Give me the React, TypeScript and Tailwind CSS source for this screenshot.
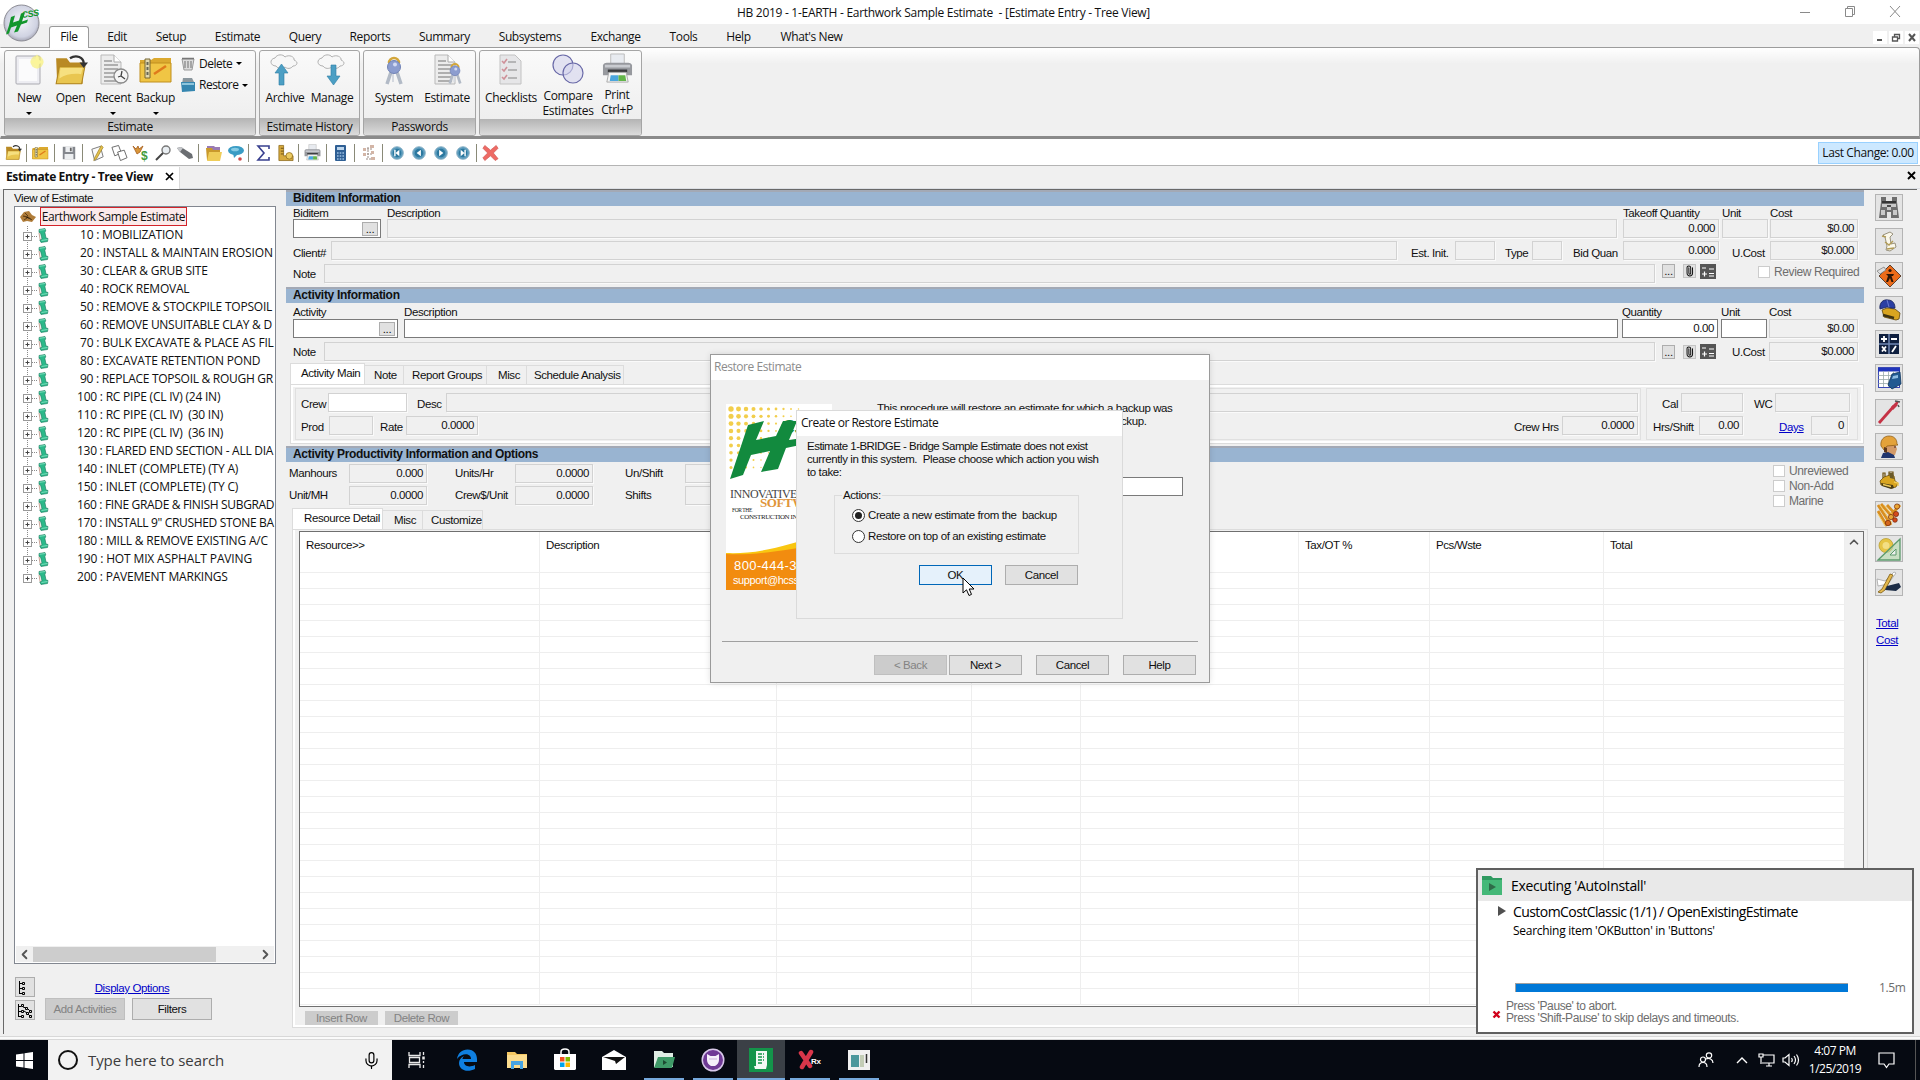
import React from "react";
import { Mic, ChevronUp, ChevronLeft, ChevronRight, Paperclip } from "lucide-react";

const UI = "font-['Open_Sans',sans-serif] text-[12px] tracking-[-0.4px]";

/* ---------- small building blocks ---------- */

type BoxProps = { className?: string; children?: React.ReactNode };

function Field({ className = "", children }: BoxProps) {
  return (
    <div className={`h-[19px] shrink-0 border border-[#d2d2d2] bg-[#f0f0f0] pr-[3px] text-right leading-[16px] shadow-[1px_1px_0_#fafafa] ${className}`}>
      {children}
    </div>
  );
}

function Input({ className = "", children }: BoxProps) {
  return (
    <div className={`h-[19px] shrink-0 border border-[#7a7a7a] bg-white pr-[3px] text-right leading-[16px] ${className}`}>
      {children}
    </div>
  );
}

function Label({ className = "", children }: BoxProps) {
  return <div className={`shrink-0 whitespace-pre leading-[14px] ${className}`}>{children}</div>;
}

function Dots({ className = "" }: { className?: string }) {
  return (
    <div className={`flex h-[14px] shrink-0 items-center justify-center border border-[#adadad] bg-[#e1e1e1] leading-[8px] ${className}`}>
      ...
    </div>
  );
}

function Button({ className = "", children }: BoxProps) {
  return (
    <div className={`flex shrink-0 items-center justify-center border border-[#adadad] bg-[#e1e1e1] pt-px ${className}`}>
      {children}
    </div>
  );
}

function SectionHeader({ children }: BoxProps) {
  return (
    <div className="h-[16px] shrink-0 border-t-2 border-[#a3a9b5] bg-[#99b4d1] pl-[7px] text-[12px] font-bold leading-[13px] tracking-[-0.3px]">
      {children}
    </div>
  );
}

function Check({ className = "", children }: BoxProps) {
  return (
    <div className={`flex items-center text-[#6d6d6d] ${className}`}>
      <span className="mr-1 h-[12px] w-[12px] border border-[#cccccc] bg-white" />
      {children}
    </div>
  );
}

function NoteButtons() {
  return (
    <>
      <Dots className="ml-[7px] w-[13px]" />
      <div className="ml-[8px] flex h-[14px] w-[13px] items-center justify-center border border-[#c4c4c4] bg-[#e1e1e1]">
        <Paperclip size={12} strokeWidth={2.2} className="rotate-[-45deg]" />
      </div>
      <svg className="ml-[4px]" width="16" height="15" viewBox="0 0 16 15">
        <rect width="16" height="15" fill="#555" />
        <path d="M2 4h4M9 5h5M9 9.5h5M2 10h5M4.500 7.500v5M9 12h5" stroke="#fff" strokeWidth="1.200" />
      </svg>
    </>
  );
}

/* ---------- icons ---------- */

const Logo = () => (
  <svg width="38" height="38" viewBox="0 0 38 38">
    <defs>
      <radialGradient id="orb" cx="50%" cy="45%" r="58%">
        <stop offset="0" stopColor="#f4f5fa" />
        <stop offset="0.75" stopColor="#d0d3e2" />
        <stop offset="1" stopColor="#9c9cab" />
      </radialGradient>
    </defs>
    <ellipse cx="18.500" cy="19" rx="17.500" ry="18" fill="url(#orb)" stroke="#8d8d95" />
    <path d="M8 13l4-1.500-2 7 6-2 2-7 4-1-3 9 6-2-1 3-6 2-3 7-4 1 3-7-6 2-2 6-3 1 3-9z" fill="#12962c" />
    <text x="19" y="14" fontSize="9" fontWeight="700" fontStyle="italic" fill="#12962c" fontFamily="Liberation Sans" transform="rotate(-8 19 14)">CSS</text>
  </svg>
);

const Folder = ({ s = 32, arrow = false }: { s?: number; arrow?: boolean }) => (
  <svg width={s} height={s} viewBox="0 0 32 32">
    <path d="M2 5h10l3 4h12v20H3z" fill="#b98a24" />
    <path d="M2 29l3-16h24l-3 16z" fill="#e9c650" stroke="#b08520" />
    <path d="M6 14h21l-1.500 6C19 19 11 20 5 24z" fill="#f6e080" />
    {arrow && <path d="M15 5c6-4 13-1 13 5" fill="none" stroke="#333" strokeWidth="2.200" />}
    {arrow && <path d="M24 9h8l-4 5z" fill="#333" />}
  </svg>
);

const NewIcon = () => (
  <svg width="32" height="32" viewBox="0 0 32 32">
    <rect x="3" y="2" width="24" height="28" rx="1" fill="#ededf2" stroke="#a9a9b0" />
    <path d="M6 5h18v22H6z" fill="#fbfbfc" />
    <circle cx="24" cy="8" r="6.500" fill="#f6ee66" opacity=".6" />
    <path d="M24 0l2 6 5 2-5 2-2 5-2-5-5-2 5-2z" fill="#fbf59a" />
  </svg>
);

const PageLines = () => (
  <>
    <path d="M4 1h13l7 7v22H4z" fill="#ececec" stroke="#b9b9b9" />
    <path d="M17 1v7h7" fill="#fff" stroke="#aaa" />
    <path d="M7 7h8M7 11h14M7 15h14M7 19h14M7 23h14M7 27h14" stroke="#9a9a9a" strokeWidth="1.500" />
  </>
);

const RecentIcon = () => (
  <svg width="32" height="32" viewBox="0 0 32 32">
    <PageLines />
    <circle cx="24" cy="22" r="7" fill="#f5f5f5" stroke="#8a8a8a" strokeWidth="1.300" />
    <path d="M25 17l-1 5 4 3M24 22l-3 1" stroke="#444" fill="none" strokeWidth="1.300" />
  </svg>
);

const BackupIcon = ({ s = 34 }: { s?: number }) => (
  <svg width={s} height={(s * 32) / 34} viewBox="0 0 34 32">
    <path d="M1 6h11l3-2h17v24H1z" fill="#dba92f" />
    <path d="M1 9h31v19H1z" fill="#f0c544" stroke="#c08f1f" />
    <path d="M6 5h5v19H6z" fill="#e2d8ae" stroke="#776633" />
    <path d="M8.500 8v14" stroke="#665" strokeWidth="2" strokeDasharray="3 2" />
    <path d="M15 20l12-8" stroke="#df7a1b" strokeWidth="2.500" />
  </svg>
);

const TrashIcon = () => (
  <svg width="14" height="15" viewBox="0 0 14 15">
    <path d="M1 3h12l-2 11H3z" fill="#dcdcdc" stroke="#999" />
    <path d="M4 5v7M7 5v7M10 5v7" stroke="#888" strokeWidth="1.300" />
    <path d="M1 2.500h12" stroke="#777" strokeWidth="1.500" />
  </svg>
);

const RestoreIcon = () => (
  <svg width="16" height="16" viewBox="0 0 16 16">
    <path d="M3 1h9l3 6H2z" fill="#8b979e" />
    <path d="M1 5h14v9l-13 1z" fill="#3586b0" />
    <path d="M2 6h12v2H2z" fill="#8cc4dc" />
  </svg>
);

const CloudIcon = ({ down = false }: { down?: boolean }) => (
  <svg width="32" height="32" viewBox="0 0 32 32">
    <path d="M7 12c-6 0-7-7-1-8 2-4 8-4 10-1 4-3 10 0 9 3 5 2 3 6-1 6-2 3-6 3-8 1-3 2-7 2-9-1z" fill="#f7f7f7" stroke="#b0b0b0" />
    {down ? (
      <path d="M15 11h5v11h4l-6.500 9L11 22h4z" fill="#4c9fc4" stroke="#2c7ea6" strokeWidth=".6" />
    ) : (
      <path d="M10 31V19H6l6.500-9 6.500 9h-4v12z" fill="#4c9fc4" stroke="#2c7ea6" strokeWidth=".6" />
    )}
  </svg>
);

const Keys = () => (
  <g>
    <path d="M11 9a5 5 0 1 1 10 0" fill="none" stroke="#d3a63a" strokeWidth="2.500" />
    <path d="M13 18l-4 12M19 18l4 12" stroke="#b2bac6" strokeWidth="3.500" />
    <path d="M15 20v8" stroke="#d4d8df" strokeWidth="2" />
    <ellipse cx="16" cy="13" rx="6.500" ry="6.500" fill="#8c9dcf" stroke="#7082b5" />
    <circle cx="17" cy="10.500" r="2" fill="#d2daf3" />
  </g>
);

const SystemIcon = () => (
  <svg width="32" height="32" viewBox="0 0 32 32"><Keys /></svg>
);

const EstimateKeyIcon = () => (
  <svg width="32" height="32" viewBox="0 0 32 32">
    <PageLines />
    <g transform="translate(12 7) scale(.75)"><Keys /></g>
  </svg>
);

const ChecklistIcon = () => (
  <svg width="32" height="32" viewBox="0 0 32 32">
    <path d="M5 1h15l6 6v23H5z" fill="#e6e6e8" stroke="#c2c2c2" />
    <path d="M13 8h8M13 16h9M13 24h9" stroke="#a5a5a5" strokeWidth="1.500" />
    <path d="M7 7l2 2 3-4M7 15l2 2 3-4M7 23l2 2 3-4" stroke="#cf9199" fill="none" strokeWidth="1.600" />
  </svg>
);

const CompareIcon = () => (
  <svg width="34" height="32" viewBox="0 0 34 32">
    <circle cx="12" cy="12" r="10" fill="#d3d3ec" fillOpacity=".6" stroke="#6a6aa8" strokeWidth="1.200" />
    <circle cx="22" cy="20" r="10" fill="#d3d3ec" fillOpacity=".6" stroke="#6a6aa8" strokeWidth="1.200" />
  </svg>
);

const PrinterIcon = ({ s = 32 }: { s?: number }) => (
  <svg width={s} height={s} viewBox="0 0 32 32">
    <path d="M9 1h14v12H9z" fill="#e8ebf0" stroke="#bbb" />
    <path d="M1 13c0-2 2-3 4-3h22c2 0 4 1 4 3v10H1z" fill="#97999e" />
    <path d="M3 12h26v3H3z" fill="#c9cbd0" />
    <path d="M6 17h20v3H6z" fill="#3a3b3e" />
    <path d="M7 20h18l2 10H5z" fill="#f5f5f5" stroke="#aaa" />
    <path d="M9 23h8v6H8z" fill="#4ba6de" />
    <path d="M17 23h7l1 6h-8z" fill="#63b54a" />
  </svg>
);

const small = "0 0 18 18";
const TI: Record<string, React.ReactNode> = {
  open: <Folder s={17} arrow />,
  backup: <BackupIcon s={17} />,
  save: (
    <svg width="16" height="16" viewBox={small}><path d="M2 2h14v14H2z" fill="#84878d" /><path d="M5 2h8v6H5zM4 10h10v6H4z" fill="#eceef0" /><path d="M10 3h2v4h-2z" fill="#666" /></svg>
  ),
  edit: (
    <svg width="17" height="18" viewBox={small}><path d="M3 5l9-3 3 11-9 4z" fill="#fafafa" stroke="#777" /><path d="M13 1l-7 13-1 3 3-2L15 3z" fill="#e4c14c" stroke="#9b7c1d" strokeWidth=".7" /></svg>
  ),
  copy: (
    <svg width="17" height="18" viewBox={small}><path d="M1 3l7-2 3 8-7 3z" fill="#fff" stroke="#666" /><path d="M7 8l7-2 3 8-7 3z" fill="#fff" stroke="#666" /></svg>
  ),
  cost: (
    <svg width="18" height="18" viewBox={small}><path d="M1 2l4 8 3-2 3-6-4 3-1-3-2 3z" fill="#d9963a" stroke="#a45c1b" strokeWidth=".8" /><text x="9" y="16" fontSize="12" fontWeight="700" fill="#3f9b3a" fontFamily="Liberation Sans">$</text></svg>
  ),
  search: (
    <svg width="18" height="18" viewBox={small}><circle cx="12" cy="6" r="4" fill="#e9eef2" stroke="#777" strokeWidth="1.400" /><path d="M9 9l-7 7" stroke="#444" strokeWidth="2" /></svg>
  ),
  torch: (
    <svg width="18" height="18" viewBox={small}><path d="M1 4l4-1 11 7 1 4-4 1L4 8z" fill="#6b6e72" /><path d="M1 4l4-1 2 1-3 4z" fill="#c7c9cc" /></svg>
  ),
  folders: (
    <svg width="18" height="18" viewBox={small}><path d="M2 2h7l1 1h5v8H2z" fill="#9a7bb4" /><path d="M1 4h6l1 2h7v10H2z" fill="#c9992c" /><path d="M4 8h13l-2 9H2z" fill="#efcd59" /></svg>
  ),
  chat: (
    <svg width="18" height="18" viewBox={small}><ellipse cx="9" cy="6.500" rx="8" ry="4.500" fill="#3a9cc4" /><ellipse cx="8" cy="5.500" rx="4" ry="1.800" fill="#86cbe4" /><path d="M6 9l1 5 4-4z" fill="#3a9cc4" /><circle cx="13" cy="15" r="1.800" fill="#cf4a4a" /></svg>
  ),
  sum: (
    <svg width="15" height="18" viewBox="0 0 15 18"><path d="M13 5V2H2l6 7-6 7h11v-3" fill="none" stroke="#39408f" strokeWidth="1.600" /></svg>
  ),
  ruler: (
    <svg width="17" height="18" viewBox={small}><path d="M2 1h5v11h10v5H2z" fill="#d7aa3d" stroke="#8a6718" strokeWidth=".8" /><path d="M4 4h3M4 7h3M4 10h3" stroke="#6b4f12" /><circle cx="13" cy="12" r="3.500" fill="#eccb62" stroke="#8a6718" strokeWidth=".8" /></svg>
  ),
  print: <PrinterIcon s={17} />,
  calc: (
    <svg width="13" height="18" viewBox="0 0 13 18"><rect x="1" y="1" width="11" height="16" rx="1" fill="#2f5f94" /><path d="M3 3h7v3H3z" fill="#bcd5ec" /><path d="M3 9h7M3 12h7M3 15h7" stroke="#9cc0e2" strokeWidth="1.500" strokeDasharray="1.600 1.100" /></svg>
  ),
  tree: (
    <svg width="16" height="18" viewBox="0 0 16 18"><path d="M7 3v12M3 5h9M3 10h9M5 15h8" stroke="#9a8b84" strokeDasharray="2 1" /><path d="M9 1h4v3H9zM2 4h3v3H2zM10 7h3v3h-3zM2 9h3v3H2zM10 13h4v3h-4z" fill="#d3b5a6" /></svg>
  ),
  del: (
    <svg width="17" height="18" viewBox={small}><path d="M3 1l6 5 6-5 2 3-5 5 5 6-3 2-5-5-6 5-2-3 5-5-5-5z" fill="#ee6a64" stroke="#cf5550" strokeWidth=".7" /></svg>
  ),
};

const Nav = ({ kind }: { kind: "first" | "prev" | "next" | "last" }) => (
  <svg width="14" height="14" viewBox="0 0 15 15">
    <circle cx="7.500" cy="7.500" r="6.800" fill="#5c9cbd" stroke="#8fb4c7" />
    <circle cx="7.500" cy="7.500" r="4.600" fill="#2b789f" />
    {kind === "first" && <path d="M10 4v7L6 7.500zM4.500 4h1.500v7H4.500z" fill="#fff" />}
    {kind === "prev" && <path d="M9.500 4v7L5 7.500z" fill="#fff" />}
    {kind === "next" && <path d="M5.500 4v7L10 7.500z" fill="#fff" />}
    {kind === "last" && <path d="M5 4v7l4-3.500zM9 4h1.500v7H9z" fill="#fff" />}
  </svg>
);

const Scroll = () => (
  <svg width="11" height="15" viewBox="0 0 11 15" className="shrink-0">
    <path d="M1 1.500l6-1 .8 2.500-1 1 1.200 6 2 .500-.500 3-6.500 1-1.200-2.500L4 11 2.500 5 1 4.500z" fill="#2bb98a" stroke="#17775a" strokeWidth=".6" />
    <path d="M1.500 2.300l5.500-.8M3.500 12.500l6-1" stroke="#8fe6c8" strokeWidth=".8" />
    <path d="M1 5l1.200 7" stroke="#b07a66" strokeWidth=".7" />
  </svg>
);

const Dozer = ({ s = 24 }: { s?: number }) => (
  <svg width={s} height={s} viewBox="0 0 24 24">
    <path d="M6 10V5h2v4M12 9V4h4v6" fill="none" stroke="#6b4e0c" strokeWidth="1.200" />
    <path d="M3 13l4-4 6-2 4 1 1 5 3 2-2 4-4 1-11-3z" fill="#d9a520" stroke="#6b4e0c" strokeWidth=".8" />
    <path d="M4 15l12 2 1 3-3 1-9-3z" fill="#4a3c14" />
    <path d="M12 5h4l1 6-4-1z" fill="#6a5a2a" />
    <path d="M6 16.500l8 2M17 14l4 1v3" stroke="#efcb58" strokeWidth="1.400" fill="none" />
  </svg>
);

const SIDE: React.ReactNode[] = [
  <svg width="24" height="24" viewBox="0 0 24 24"><path d="M4 1h5v4h6V1h5v5l2 16h-8v-6h-4v6H2L4 6z" fill="#6e6e6e" /><path d="M5 8h5v3H5zM14 8h5v3h-5zM10 8h4v6h-4zM4 14h4v5H4zM16 14h4v5h-4z" fill="#c9c9c9" /><path d="M10 10h4M5 6h14" stroke="#222" strokeWidth="1.500" /></svg>,
  <svg width="24" height="24" viewBox="0 0 24 24"><path d="M6 5l7-3 3 2-3 3 1 7 4-1 1 4-6 4-4-1 1-4-2-9z" fill="#fbf8ea" stroke="#8f8770" strokeWidth=".9" /><path d="M5 6l4 1M8 12l4 3 4-4M10 19l7-1" stroke="#b19b56" strokeWidth="1.400" fill="none" /></svg>,
  <svg width="26" height="26" viewBox="0 0 26 26"><path d="M14 2l11 11-11 11L3 13z" fill="#ec6b19" stroke="#3c2a1c" strokeWidth=".8" /><circle cx="14" cy="7.500" r="1.600" fill="#2d1708" /><path d="M10 11h8l-1 2h-1.500l2 6h-2l-1.500-4-2 4h-2l2-6z" fill="#2d1708" /><path d="M1 8l7-4 2 3-6 4z" fill="#ddd" stroke="#777" strokeWidth=".7" /></svg>,
  <svg width="25" height="25" viewBox="0 0 25 25"><path d="M5 13l5-2 8 1 5 4-1 6-3 1-12-3z" fill="#d9a520" stroke="#5e460d" strokeWidth=".8" /><path d="M6 18l11 3" stroke="#3f3412" strokeWidth="2.500" /><path d="M3 12c-1-6 3-10 8-9 5 0 7 4 7 8-3 1-5-1-8-1z" fill="#2b3fa3" stroke="#172157" strokeWidth=".8" /><path d="M10 3l2 7" stroke="#6a7bd0" /></svg>,
  <svg width="24" height="24" viewBox="0 0 24 24"><rect x="2" y="2" width="20" height="20" fill="#0f1f3f" /><path d="M12 2v20M2 12h20" stroke="#7088b5" strokeWidth="1.500" /><path d="M4 7h6M7 4v6M14 7h6M5 14.500l4 5M9 14.500l-4 5M19 14l-4 6" stroke="#fff" strokeWidth="1.800" /></svg>,
  <svg width="25" height="25" viewBox="0 0 25 25"><rect x="1.500" y="1.500" width="21" height="20" fill="#fff" stroke="#3a49b5" /><path d="M1 2h22v3.500H1z" fill="#2035bb" /><path d="M1.500 9.500h21M1.500 13.500h21M1.500 17.500h21M6.500 5v16M11.500 5v16M16.500 5v16" stroke="#9aa" strokeWidth=".8" /><path d="M15 8l8-2 1 12-9 5-4-4z" fill="#225a92" stroke="#12365e" strokeWidth=".8" /><path d="M16 10l5-1v3l-6 1z" fill="#8fbde3" /></svg>,
  <svg width="26" height="26" viewBox="0 0 26 26"><path d="M3 24L18 7" stroke="#c53245" strokeWidth="2.800" /><path d="M15 8l5-5 3-1-2 5-4 4z" fill="#c53245" /><path d="M19 2l5 1M22 6l1 2" stroke="#555" strokeWidth="1.600" /></svg>,
  <svg width="25" height="25" viewBox="0 0 25 25"><path d="M8 10h10l2 5-2 6h-8z" fill="#d39a68" /><path d="M4 24l2-5 5-1 6 3 1 3z" fill="#1f356e" /><path d="M4 12c-1-6 3-10 8-10s8 3 8 8l1 1-11 1-3 4z" fill="#e3a23a" stroke="#87550d" strokeWidth=".7" /><path d="M7 13l3 1v5l-3-1z" fill="#5c361a" /><path d="M17 13h2" stroke="#422" /></svg>,
  <Dozer />,
  <svg width="26" height="26" viewBox="0 0 26 26"><path d="M2 3l13 20M5 2l13 15M2 9l9 15M11 3l9 10M24 3l-9 10" stroke="#d98f1f" strokeWidth="2.800" /><path d="M4 3l12 18M8 3l11 13M2 12l7 12" stroke="#f4cc68" /><circle cx="21" cy="4.500" r="2.600" fill="#e9a534" stroke="#732508" strokeWidth=".7" /><circle cx="20" cy="12" r="2.600" fill="#d44a1c" stroke="#732508" strokeWidth=".7" /><circle cx="15" cy="15" r="2.600" fill="#e9a534" stroke="#732508" strokeWidth=".7" /><circle cx="19" cy="18" r="2.300" fill="#d44a1c" stroke="#732508" strokeWidth=".7" /><circle cx="12" cy="21" r="2.700" fill="#d4661c" stroke="#732508" strokeWidth=".7" /></svg>,
  <svg width="26" height="26" viewBox="0 0 26 26"><circle cx="10" cy="9.500" r="7" fill="#e6c545" stroke="#b9a034" strokeWidth=".8" /><circle cx="10" cy="9.500" r="3.500" fill="#f3df84" /><path d="M2 24L24 3v21z" fill="#b7dcae" fillOpacity=".6" stroke="#5c9a6c" strokeWidth="1.300" /><path d="M14 19l6-6v6z" fill="#f0f0f0" stroke="#5c9a6c" /></svg>,
  <svg width="26" height="26" viewBox="0 0 26 26"><path d="M1 9l8 2 9-9 2 1-8 11-10 2z" fill="#fff" stroke="#999" strokeWidth=".7" /><path d="M2 22l4-3L14 4l3 1-8 15-4 3z" fill="#e3b84e" stroke="#7c5c12" strokeWidth=".8" /><path d="M11 16l12-3 2 4-5 4-11-1z" fill="#1c2c45" /></svg>,
];

/* ---------- title + ribbon ---------- */

function TitleBar() {
  return (
    <div className={`flex h-[24px] items-center bg-white pl-[737px] pr-[18px] pt-[2px] ${UI}`}>
      <span className="whitespace-pre tracking-[-0.29px]">HB 2019 - 1-EARTH - Earthwork Sample Estimate  - [Estimate Entry - Tree View]</span>
      <svg className="mb-[2px] ml-auto" width="102" height="14" viewBox="0 0 102 14" fill="none" stroke="#8a8a8a">
        <path d="M0 7.500h10M45.500 3.500h7v8h-7zM47.500 3V1.500h7v8h-2M90 1l10 11M100 1l-10 11" />
      </svg>
    </div>
  );
}

const MENUS = [
  ["Edit", "w-[20px]"], ["Setup", "w-[30px]"], ["Estimate", "w-[45px]"], ["Query", "w-[32px]"], ["Reports", "w-[40px]"],
  ["Summary", "w-[51px]"], ["Subsystems", "w-[62px]"], ["Exchange", "w-[51px]"], ["Tools", "w-[27px]"], ["Help", "w-[25px]"], ["What's New", "w-[63px]"],
];

function MenuBar() {
  return (
    <div className={`flex h-[23px] items-end pl-[49px] ${UI}`}>
      <div className="z-10 mb-[-1px] flex h-[22px] w-[40px] items-center justify-center rounded-t-[3px] border border-b-0 border-[#9a9a9a] bg-white pb-px">File</div>
      <div className="ml-[18px] flex h-[22px] items-center gap-[29px] pt-[2px]">
        {MENUS.map(([m, w]) => (
          <span key={m} className={`flex justify-center whitespace-nowrap ${w}`}>{m}</span>
        ))}
      </div>
      <svg className="mb-[2px] ml-auto" width="48" height="15" viewBox="0 0 48 15">
        <path d="M1 1h14v13H1zM17 1h14v13H17zM33 1h14v13H33z" fill="#fff" />
        <path d="M5 10h5" stroke="#555" strokeWidth="2" />
        <path d="M20.500 7h5v4h-5zM22.500 7V4.500h5v4h-2" fill="none" stroke="#555" strokeWidth="1.300" />
        <path d="M37 4l6 7M43 4l-6 7" stroke="#555" strokeWidth="2" />
      </svg>
    </div>
  );
}

function Caret() {
  return <span className="h-0 w-0 border-x-[3px] border-t-[3.5px] border-x-transparent border-t-black" />;
}

function Big({ icon, label, w, caret, second }: { icon: React.ReactNode; label: string; w: string; caret?: boolean; second?: string }) {
  return (
    <div className={`flex flex-col items-center ${w}`}>
      <div className="flex h-[34px] items-center">{icon}</div>
      <span className="h-[16px] whitespace-nowrap leading-[21px]">{label}</span>
      {caret && <span className="flex h-[14px] items-center pt-[6px]"><Caret /></span>}
      {second && <span className="whitespace-nowrap leading-[19px]">{second}</span>}
    </div>
  );
}

function Group({ title, w, children }: { title: string; w: string; children: React.ReactNode }) {
  return (
    <div className={`flex h-[86px] shrink-0 flex-col overflow-hidden rounded-[3px] border border-[#a5a5a5] bg-linear-to-b from-[#fafafa] to-[#ececec] ${w}`}>
      <div className="flex h-[68px] pt-[2px]">{children}</div>
      <div className="flex h-[17px] items-center justify-center bg-linear-to-b from-[#b4b4b4] to-[#dcdcdc] leading-[14px]">{title}</div>
    </div>
  );
}

function Ribbon() {
  return (
    <div className="flex h-[92px] gap-[3px] rounded-tr border border-b-[3px] border-[#9c9c9c] border-b-[#8a8a8a] border-l-transparent bg-[linear-gradient(#ffffff,#f0f0f0_18%)] pl-[3px] pt-[2px] font-['Open_Sans',sans-serif] text-[12px] tracking-[-0.35px]">
      <Group title="Estimate" w="w-[252px]">
        <Big icon={<NewIcon />} label="New" w="ml-[4px] w-[40px]" caret />
        <Big icon={<Folder arrow s={34} />} label="Open" w="w-[43px]" />
        <Big icon={<RecentIcon />} label="Recent" w="w-[42px]" caret />
        <Big icon={<BackupIcon />} label="Backup" w="w-[43px]" caret />
        <div className="ml-[3px] flex flex-col">
          <div className="flex h-[21px] items-center gap-[4px] pl-[1px] tracking-[-0.5px]"><TrashIcon />Delete<Caret /></div>
          <div className="flex h-[22px] items-center gap-[3px] tracking-[-0.5px]"><RestoreIcon />Restore<Caret /></div>
        </div>
      </Group>
      <Group title="Estimate History" w="w-[101px]">
        <Big icon={<CloudIcon />} label="Archive" w="ml-[2px] w-[46px]" />
        <Big icon={<CloudIcon down />} label="Manage" w="w-[48px]" />
      </Group>
      <Group title="Passwords" w="w-[113px]">
        <Big icon={<SystemIcon />} label="System" w="ml-[3px] w-[54px]" />
        <Big icon={<EstimateKeyIcon />} label="Estimate" w="w-[52px]" />
      </Group>
      <Group title="" w="w-[163px]">
        <Big icon={<ChecklistIcon />} label="Checklists" w="ml-[3px] w-[56px]" />
        <Big icon={<CompareIcon />} label="Compare" w="w-[58px]" second="Estimates" />
        <Big icon={<PrinterIcon s={31} />} label="Print" w="w-[40px]" second="Ctrl+P" />
      </Group>
    </div>
  );
}

function Sep() {
  return <span className="h-[18px] w-px bg-[#8a8a78]" />;
}

function Tool({ children, w = "w-[22px]" }: { children: React.ReactNode; w?: string }) {
  return <span className={`flex justify-center ${w}`}>{children}</span>;
}

function ToolBar() {
  return (
    <div className={`flex h-[27px] items-center border-b border-[#b4b4b4] bg-white pt-px ${UI}`}>
      <Tool w="w-[26px]">{TI.open}</Tool><Sep />
      <Tool w="w-[27px]">{TI.backup}</Tool><Sep />
      <Tool w="w-[27px]">{TI.save}</Tool><Sep />
      <div className="flex w-[115px] justify-center pl-[1px]">
        <Tool>{TI.edit}</Tool><Tool>{TI.copy}</Tool><Tool>{TI.cost}</Tool><Tool>{TI.search}</Tool><Tool>{TI.torch}</Tool>
      </div>
      <Sep />
      <div className="flex w-[49px] justify-center pl-[2px]"><Tool>{TI.folders}</Tool><Tool>{TI.chat}</Tool></div><Sep />
      <div className="flex w-[49px] justify-center pl-[2px]"><Tool>{TI.sum}</Tool><Tool>{TI.ruler}</Tool></div><Sep />
      <Tool w="w-[27px]">{TI.print}</Tool><Sep />
      <Tool w="w-[27px]">{TI.calc}</Tool><Sep />
      <Tool w="w-[27px]">{TI.tree}</Tool><Sep />
      <div className="flex w-[93px] justify-center"><Tool><Nav kind="first" /></Tool><Tool><Nav kind="prev" /></Tool><Tool><Nav kind="next" /></Tool><Tool><Nav kind="last" /></Tool></div>
      <Sep />
      <Tool w="w-[27px]">{TI.del}</Tool>
      <div className="ml-auto mr-[2px] flex h-[22px] w-[100px] items-center justify-center whitespace-nowrap border border-[#99d1ff] bg-[#cce8ff] pt-px">Last Change: 0.00</div>
    </div>
  );
}

function DocTabs() {
  return (
    <div className="flex h-[23px] items-start justify-between border-b border-[#dcdfe4] pt-px font-['Open_Sans',sans-serif] text-[12px]">
      <div className="flex h-[22px] w-[180px] items-center border-r border-[#dadada] bg-white pb-[3px] pl-[6px] font-bold tracking-[-0.38px]">
        <span className="w-[159px]">Estimate Entry - Tree View</span>
        <svg width="9" height="9" viewBox="0 0 9 9"><path d="M1 1l7 7M8 1L1 8" stroke="#000" strokeWidth="1.700" /></svg>
      </div>
      <svg className="mr-[4px] mt-[4px]" width="9" height="9" viewBox="0 0 9 9"><path d="M1 1l7 7M8 1L1 8" stroke="#000" strokeWidth="1.900" /></svg>
    </div>
  );
}

/* ---------- estimate tree ---------- */

const MID = "tracking-[-0.22px]";
const TIGHT = "tracking-[-0.34px]";
const ITEMS: [number, string, string][] = [
  [10, "MOBILIZATION", MID], [20, "INSTALL & MAINTAIN EROSION", "tracking-[-0.1px]"], [30, "CLEAR & GRUB SITE", MID], [40, "ROCK REMOVAL", MID],
  [50, "REMOVE & STOCKPILE TOPSOIL", MID], [60, "REMOVE UNSUITABLE CLAY & D", "tracking-[-0.28px]"], [70, "BULK EXCAVATE & PLACE AS FIL", "tracking-[-0.18px]"],
  [80, "EXCAVATE RETENTION POND", "tracking-[-0.17px]"], [90, "REPLACE TOPSOIL & ROUGH GR", "tracking-[-0.28px]"], [100, "RC PIPE (CL IV) (24 IN)", MID],
  [110, "RC PIPE (CL IV)  (30 IN)", MID], [120, "RC PIPE (CL IV)  (36 IN)", MID], [130, "FLARED END SECTION - ALL DIA", "tracking-[-0.28px]"],
  [140, "INLET (COMPLETE) (TY A)", MID], [150, "INLET (COMPLETE) (TY C)", MID], [160, "FINE GRADE & FINISH SUBGRAD", TIGHT],
  [170, "INSTALL 9\" CRUSHED STONE BA", TIGHT], [180, "MILL & REMOVE EXISTING A/C", "tracking-[-0.18px]"], [190, "HOT MIX ASPHALT PAVING", "tracking-[-0.14px]"], [200, "PAVEMENT MARKINGS", MID],
];

function TreePanel() {
  return (
    <div className="flex w-[282px] shrink-0 flex-col pl-[10px]">
      <div className="h-[16px] leading-[16px]">View of Estimate</div>
      <div className="flex h-[758px] w-[262px] flex-col border border-[#828790] bg-white font-['Open_Sans',sans-serif] text-[12px] tracking-[-0.22px]">
        <div className="flex h-[19px] items-center pl-[4px]">
          <svg width="17" height="13" viewBox="0 0 17 13"><path d="M1 7l4-5 5-1 3 4 4 2-4 5-5-1-4 1z" fill="#b07d3a" /><path d="M4 6l5 1 4 3M6 3l3 3M5 10l3-2" stroke="#5f3d14" /></svg>
          <span className="ml-[4px] flex h-[19px] w-[147px] items-center justify-center whitespace-nowrap border border-[#d2232a] bg-[#fbeaea] tracking-[-0.42px]">Earthwork Sample Estimate</span>
        </div>
        <div className="flex flex-1 flex-col">
          {ITEMS.map(([n, name, tracking], i) => (
            <div key={n} className="flex h-[18px] shrink-0 items-center">
              <svg width="22" height="18" viewBox="0 0 22 18" className="shrink-0">
                <path d={i === ITEMS.length - 1 ? "M12.500 0v10" : "M12.500 0v18"} stroke="#8a8a8a" strokeDasharray="1 1" />
                <path d="M17 10.500h5" stroke="#8a8a8a" strokeDasharray="1 1" />
                <rect x="8.500" y="6.500" width="8" height="8" fill="#fff" stroke="#9a9a9a" />
                <path d="M10.500 10.500h4M12.500 8.500v4" stroke="#444" />
              </svg>
              <span className="ml-px"><Scroll /></span>
              <span className={`shrink-0 whitespace-pre leading-[16px] ${tracking} ${n < 100 ? "ml-[31px]" : "ml-[28px]"}`}>{n} : {name}</span>
            </div>
          ))}
        </div>
        <div className="mx-px mb-px flex h-[16px] items-center bg-[#f0f0f0] px-[1px] text-[#555]">
          <ChevronLeft size={15} strokeWidth={3} />
          <div className="ml-px h-[15px] w-[183px] bg-[#cdcdcd]" />
          <ChevronRight size={15} strokeWidth={3} className="ml-auto" />
        </div>
      </div>
      <div className="mt-[13px] flex gap-[10px] pl-px">
        <div className="flex flex-col gap-[3px]">
          <Button className="h-[20px] w-[20px]">
            <svg width="14" height="16" viewBox="0 0 14 16" fill="none" stroke="#000"><path d="M1.500 1v13M2 3.500h2M2 8.500h2M2 13.500h2M4.500 2.500h2v2h-2zM4.500 7.500h2v2h-2zM4.500 12.500h2v2h-2z" /></svg>
          </Button>
          <Button className="h-[20px] w-[20px]">
            <svg width="16" height="16" viewBox="0 0 16 16" fill="none" stroke="#000"><path d="M1.500 1v13M2 3.500h2M2 8.500h2M2 13.500h2M4.500 1.500h2v2h-2zM4.500 7.500h2v2h-2zM4.500 12.500h2v2h-2zM8.500 4.500h2v2h-2zM12.500 7.500h2v2h-2zM9.500 9.500h2v2h-2zM12.500 12.500h2v2h-2zM6 4l3 1M7 8l3 2M11 6l2 2M11 11l2 2" /></svg>
          </Button>
        </div>
        <div className="flex flex-col">
          <div className="flex h-[21px] w-[168px] items-center justify-center pl-[6px] pt-[3px] text-[#0000c8] underline">Display Options</div>
          <div className="flex gap-[7px]">
            <Button className="h-[22px] w-[80px] !border-[#bfbfbf] !bg-[#cccccc] text-[#838383]">Add Activities</Button>
            <Button className="h-[22px] w-[80px]">Filters</Button>
          </div>
        </div>
      </div>
    </div>
  );
}

/* ---------- entry form ---------- */

function BiditemSection() {
  return (
    <div className="flex h-[81px] shrink-0 flex-col pl-[7px]">
      <div className="flex h-[13px]">
        <Label className="w-[94px]">Biditem</Label><Label className="w-[1236px]">Description</Label>
        <Label className="w-[99px]">Takeoff Quantity</Label><Label className="w-[48px]">Unit</Label><Label>Cost</Label>
      </div>
      <div className="flex">
        <Input className="flex w-[88px] items-center justify-end !pr-[2px]"><Dots className="w-[16px]" /></Input>
        <Field className="ml-[6px] w-[1230px]" />
        <Field className="ml-[6px] w-[96px]">0.000</Field>
        <Field className="ml-[3px] w-[46px]" />
        <Field className="ml-[2px] w-[88px]">$0.00</Field>
      </div>
      <div className="mt-[3px] flex">
        <Label className="w-[38px] pt-[5px]">Client#</Label><Field className="w-[1066px]" />
        <Label className="ml-[14px] w-[44px] pt-[5px]">Est. Init.</Label><Field className="w-[40px]" />
        <Label className="ml-[10px] w-[27px] pt-[5px]">Type</Label><Field className="w-[30px]" />
        <Label className="ml-[11px] w-[50px] pt-[5px]">Bid Quan</Label><Field className="w-[96px]">0.000</Field>
        <Label className="ml-[13px] w-[38px] pt-[5px]">U.Cost</Label><Field className="w-[88px]">$0.000</Field>
      </div>
      <div className="mt-[4px] flex">
        <Label className="w-[31px] pt-[3px]">Note</Label><Field className="w-[1331px]" />
        <NoteButtons />
        <Check className="ml-[42px] h-[16px] text-[12px] tracking-[-0.4px]">Review Required</Check>
      </div>
    </div>
  );
}

function ActivitySection() {
  return (
    <div className="flex h-[58px] shrink-0 flex-col pl-[7px]">
      <div className="flex h-[16px] pt-[2px]">
        <Label className="w-[111px]">Activity</Label><Label className="w-[1218px]">Description</Label>
        <Label className="w-[99px]">Quantity</Label><Label className="w-[48px]">Unit</Label><Label>Cost</Label>
      </div>
      <div className="flex">
        <Input className="flex w-[105px] items-center justify-end !pr-[2px]"><Dots className="w-[16px]" /></Input>
        <Input className="ml-[6px] w-[1214px]" />
        <Input className="ml-[4px] w-[96px]">0.00</Input>
        <Input className="ml-[3px] w-[46px]" />
        <Field className="ml-[2px] w-[89px]">$0.00</Field>
      </div>
      <div className="mt-[4px] flex">
        <Label className="w-[31px] pt-[3px]">Note</Label><Field className="w-[1331px]" />
        <div className="flex h-[19px] items-center"><NoteButtons /></div>
        <Label className="ml-[16px] w-[37px] pt-[3px]">U.Cost</Label><Field className="w-[89px]">$0.000</Field>
      </div>
    </div>
  );
}

function Tab({ active = false, className = "", children }: BoxProps & { active?: boolean }) {
  return (
    <div className={`flex whitespace-nowrap border-r border-t border-[#dcdcdc] ${active ? "h-[21px] items-center border-l bg-white pb-px" : "h-[19px] items-center pt-px"} ${className}`}>
      {children}
    </div>
  );
}

function ActivityTabs() {
  return (
    <>
      <div className="z-10 mt-[3px] flex h-[20px] shrink-0 items-end pl-[4px]">
        <Tab active className="w-[75px] pl-[10px]">Activity Main</Tab>
        <Tab className="w-[39px] pl-[9px]">Note</Tab>
        <Tab className="w-[83px] pl-[8px]">Report Groups</Tab>
        <Tab className="w-[40px] pl-[11px]">Misc</Tab>
        <Tab className="w-[97px] pl-[7px]">Schedule Analysis</Tab>
      </div>
      <div className="ml-[4px] flex h-[60px] shrink-0 gap-[5px] border border-[#dcdcdc] bg-[#f0f0f0] px-[4px] py-[3px] shadow-[inset_2px_2px_0_#fff,inset_-2px_-2px_0_#fff]">
        <div className="flex w-[1346px] flex-col border border-[#e0e0e0] pl-[5px] pt-[4px]">
          <div className="flex">
            <Label className="w-[27px] pt-[4px]">Crew</Label><Field className="w-[79px] !bg-white" />
            <Label className="ml-[10px] w-[29px] pt-[4px]">Desc</Label><Field className="w-[1192px]" />
          </div>
          <div className="mt-[4px] flex">
            <Label className="w-[28px] pt-[4px]">Prod</Label><Field className="w-[44px]" />
            <Label className="ml-[7px] w-[26px] pt-[4px]">Rate</Label><Field className="w-[72px]">0.0000</Field>
            <Label className="ml-[1036px] w-[48px] pt-[4px]">Crew Hrs</Label><Field className="w-[76px]">0.0000</Field>
          </div>
        </div>
        <div className="flex w-[212px] flex-col border border-[#e0e0e0] pl-[6px] pt-[4px]">
          <div className="flex">
            <Label className="ml-[9px] w-[19px] pt-[4px]">Cal</Label><Field className="w-[62px]" />
            <Label className="ml-[11px] w-[21px] pt-[4px]">WC</Label><Field className="w-[75px]" />
          </div>
          <div className="mt-[4px] flex">
            <Label className="w-[46px] pt-[4px]">Hrs/Shift</Label><Field className="w-[44px]">0.00</Field>
            <Label className="ml-[36px] w-[32px] pt-[4px] text-[#0000c8] underline">Days</Label><Field className="w-[37px]">0</Field>
          </div>
        </div>
      </div>
    </>
  );
}

function Productivity() {
  const rows = [
    ["Manhours", "0.000", "Units/Hr", "0.0000", "Un/Shift"],
    ["Unit/MH", "0.0000", "Crew$/Unit", "0.0000", "Shifts"],
  ];
  return (
    <div className="flex h-[48px] shrink-0 justify-between pt-[2px]">
      <div className="flex flex-col gap-[3px] pl-[3px]">
        {rows.map((r) => (
          <div key={r[0]} className="flex">
            <Label className="w-[60px] pt-[2px]">{r[0]}</Label><Field className="w-[78px]">{r[1]}</Field>
            <Label className="ml-[28px] w-[60px] pt-[2px]">{r[2]}</Label><Field className="w-[78px]">{r[3]}</Field>
            <Label className="ml-[32px] w-[60px] pt-[2px]">{r[4]}</Label><Field className="w-[78px]" />
          </div>
        ))}
      </div>
      <div className="mt-[-1px] flex w-[91px] flex-col text-[12px] tracking-[-0.4px]">
        <Check className="h-[15px]">Unreviewed</Check><Check className="h-[16px]">Non-Add</Check><Check className="h-[14px]">Marine</Check>
      </div>
    </div>
  );
}

const COLS = "grid grid-cols-[240px_237px_195px_109px_218px_131px_174px_241px]";
const HEADS = ["Resource>>", "Description", "", "", "", "Tax/OT %", "Pcs/Wste", "Total"];

function ResourceDetail() {
  return (
    <>
      <div className="z-10 flex h-[19px] shrink-0 items-end pl-[6px]">
        <Tab active className="w-[91px] pl-[11px]">Resource Detail</Tab>
        <Tab className="w-[40px] pl-[11px]">Misc</Tab>
        <Tab className="w-[60px] pl-[8px]">Customize</Tab>
      </div>
      <div className="ml-[6px] flex h-[499px] w-[1576px] shrink-0 flex-col border border-[#dcdcdc] bg-[#f0f0f0] pl-[6px] pt-[1px] shadow-[inset_2px_0_0_#fff,inset_0_-2px_0_#fff]">
        <div className="flex h-[476px] w-[1565px] overflow-hidden border border-[#6f6f6f] bg-white">
          <div className="flex-1">
            <div className={COLS}>
              {HEADS.map((h, i) => (
                <div key={i} className="h-[41px] border-b border-r border-[#eeeeee] pl-[6px] pt-[6px] leading-[15px]">{h}</div>
              ))}
            </div>
            {Array.from({ length: 27 }, (_, r) => (
              <div key={r} className={COLS}>
                {HEADS.map((_, i) => <div key={i} className="h-[16px] border-b border-r border-[#eeeeee]" />)}
              </div>
            ))}
          </div>
          <div className="flex w-[18px] justify-center bg-[#f0f0f0] pt-[3px] text-[#555]"><ChevronUp size={14} strokeWidth={3} /></div>
        </div>
        <div className="mt-[4px] flex gap-[7px] pl-[6px] text-[#838383]">
          <div className="flex h-[14px] w-[73px] items-center justify-center bg-[#cccccc] pt-px">Insert Row</div>
          <div className="flex h-[14px] w-[73px] items-center justify-center bg-[#cccccc] pt-px">Delete Row</div>
        </div>
      </div>
    </>
  );
}

function SideBar() {
  return (
    <div className="flex flex-1 flex-col pl-[11px] pt-[4px]">
      <div className="flex flex-col gap-[6.8px]">
        {SIDE.map((icon, i) => (
          <div key={i} className="flex h-[27.3px] w-[28px] items-center justify-center border border-[#b4b4b4] bg-[#e4e4e4]">{icon}</div>
        ))}
      </div>
      <div className="mt-[19px] pl-px leading-[17px] text-[#0000c8] underline">Total<br />Cost</div>
    </div>
  );
}

/* ---------- dialogs ---------- */

function Banner() {
  const dots = [];
  for (let r = 0; r < 9; r++)
    for (let c = 0; c < 10; c++) {
      const rad = 2.7 - c * 0.22 - r * 0.15;
      if (rad > 0.4) dots.push(<circle key={`${r}-${c}`} cx={5 + c * 7.5} cy={5 + r * 7.3} r={rad} fill="#f2ce4c" />);
    }
  return (
    <svg width="106" height="186" viewBox="0 0 106 186" className="absolute left-[15px] top-[49px]">
      <rect width="106" height="186" fill="#fff" />
      {dots}
      <path d="M22 21l16-4-8 19 20-4 7-15h14l-8 19 20-3-4 7-19 4-8 21-17 3 9-21-19 4-8 20-13 4z" fill="#128a3e" />
      <text x="54" y="30" fontSize="21" fontStyle="italic" fontWeight="700" fill="#128a3e" fontFamily="Liberation Sans">CSS</text>
      <g fontFamily="Liberation Serif">
        <text x="4" y="94" fontSize="12" fill="#444" textLength="67">INNOVATIVE</text>
        <text x="34" y="103" fontSize="13" fontWeight="700" fill="#e0953a">SOFTWARE</text>
        <text x="6" y="108" fontSize="5.500" fill="#222">FOR THE</text>
        <text x="14" y="115" fontSize="7" fill="#222">CONSTRUCTION INDUSTRY</text>
      </g>
      <path d="M0 149c25 1 50-3 106-22v59H0z" fill="#f9c611" />
      <path d="M0 150c28 1 52-2 106-12v48H0z" fill="#f28c0f" />
      <text x="8" y="166" fontSize="13" fill="#fff" fontFamily="Liberation Sans" letterSpacing=".4">800-444-3196</text>
      <text x="7" y="180" fontSize="11" fill="#fff" fontFamily="Liberation Sans">support@hcss.com</text>
    </svg>
  );
}

function Radio({ on = false, children }: BoxProps & { on?: boolean }) {
  return (
    <div className="flex h-[21px] items-center whitespace-pre">
      <span className="mr-[3px] flex h-[13px] w-[13px] items-center justify-center rounded-full border border-[#333] bg-white">
        {on && <span className="h-[7px] w-[7px] rounded-full bg-[#222]" />}
      </span>
      {children}
    </div>
  );
}

function RestoreDialog() {
  return (
    <div className="absolute left-[710px] top-[354px] z-20 flex h-[329px] w-[500px] flex-col border border-[#9a9a9a] bg-[#f0f0f0] shadow-[0_0_6px_rgba(0,0,0,0.12)]">
      <div className="h-[25px] bg-white pl-[3px] font-['Open_Sans',sans-serif] text-[12px] leading-[24px] tracking-[-0.45px] text-[#8c8c8c]">Restore Estimate</div>
      <Banner />
      <div className="ml-[166px] mt-[22px] w-[300px] whitespace-nowrap leading-[13px]">
        This procedure will restore an estimate for which a backup was
        <div className="pl-[244px] leading-[13px]">ckup.</div>
      </div>
      <Input className="ml-[166px] mt-[49px] w-[306px]" />
      <div className="mx-[11px] mt-auto border-t border-[#a0a0a0]" />
      <div className="flex pb-[7px] pl-[163px] pt-[13px]">
        <Button className="h-[20px] w-[73px] !border-[#bfbfbf] !bg-[#cccccc] text-[#838383]">&lt; Back</Button>
        <Button className="ml-[2px] h-[20px] w-[73px]">Next &gt;</Button>
        <Button className="ml-[14px] h-[20px] w-[73px]">Cancel</Button>
        <Button className="ml-[14px] h-[20px] w-[73px]">Help</Button>
      </div>
    </div>
  );
}

function CreateDialog() {
  return (
    <div className="absolute left-[796px] top-[410px] z-30 flex h-[209px] w-[327px] flex-col border border-[#dadada] bg-[#f0f0f0]">
      <div className="h-[25px] bg-white pl-[4px] font-['Open_Sans',sans-serif] text-[12px] leading-[24px] tracking-[-0.48px]">Create or Restore Estimate</div>
      <div className="whitespace-pre pl-[10px] pt-[4px] leading-[13px]"><span className="tracking-[-0.52px]">Estimate 1-BRIDGE - Bridge Sample Estimate does not exist</span>{"\ncurrently in this system.  Please choose which action you wish\nto take:"}</div>
      <fieldset className="ml-[37px] mt-[10px] h-[65px] w-[245px] border border-[#dcdcdc] pl-[17px] pt-[3px]">
        <legend className="-ml-[10px] px-[1px] leading-[13px]">Actions:</legend>
        <Radio on>Create a new estimate from the  backup</Radio>
        <Radio>Restore on top of an existing estimate</Radio>
      </fieldset>
      <div className="mt-[11px] flex gap-[13px] pl-[122px]">
        <Button className="h-[20px] w-[73px] !border-[#0067b8] !bg-[#e5f1fb]">OK</Button>
        <Button className="h-[20px] w-[73px]">Cancel</Button>
      </div>
      <svg className="absolute left-[165px] top-[166px]" width="13" height="20" viewBox="0 0 13 20"><path d="M1 1v15l3.500-3.200L7 18.500l2.500-1.100L7.200 12H12z" fill="#fff" stroke="#000" /></svg>
    </div>
  );
}

function ProgressPopup() {
  return (
    <div className="absolute left-[1476px] top-[868px] z-30 flex h-[166px] w-[438px] flex-col border-2 border-[#606060] bg-white font-['Open_Sans',sans-serif] text-black">
      <div className="flex h-[31px] items-center bg-[#e9e9e9] pl-[4px]">
        <svg width="20" height="19" viewBox="0 0 20 19"><path d="M0 0h9l2 2h9v17H0z" fill="#2f9a60" /><path d="M0 4h20v15H0z" fill="#45b878" /><path d="M7 7l7 4-7 4z" fill="#2f6b49" /></svg>
        <span className="ml-[9px] text-[14px] tracking-[-0.33px]">Executing &apos;AutoInstall&apos;</span>
      </div>
      <div className="flex h-[20px] items-center pl-[20px]">
        <span className="h-0 w-0 border-y-[5px] border-l-[8px] border-y-transparent border-l-[#505050]" />
        <span className="ml-[7px] whitespace-nowrap text-[14px] tracking-[-0.57px]">CustomCostClassic (1/1) / OpenExistingEstimate</span>
      </div>
      <div className="h-[19px] pl-[35px] text-[12px] leading-[20px] tracking-[-0.28px]">Searching item &apos;OKButton&apos; in &apos;Buttons&apos;</div>
      <div className="mt-[40px] flex items-center">
        <div className="ml-[37px] h-[9px] w-[333px] border-l border-t border-[#a0a0a0] bg-[#0078d7]" />
        <div className="ml-[31px] pt-[2px] text-[12px] leading-[12px] tracking-[-0.35px] text-[#6d6d6d]">1.5m</div>
      </div>
      <div className="mt-[6px] flex items-center pl-[14px] font-['Liberation_Sans',sans-serif] text-[12px] leading-[12px] tracking-[-0.4px] text-[#6d6d6d]">
        <svg className="mr-[5px] mt-[5px]" width="9" height="9" viewBox="0 0 9 9"><path d="M1.500 1.500l6 6M7.500 1.500l-6 6" stroke="#d0021b" strokeWidth="2.400" /></svg>
        <div className="whitespace-nowrap">Press &apos;Pause&apos; to abort.<br />Press &apos;Shift-Pause&apos; to skip delays and timeouts.</div>
      </div>
    </div>
  );
}

/* ---------- taskbar ---------- */

const APPS: { icon: React.ReactNode; w: string; line?: string; bg?: string }[] = [
  { w: "w-[49px]", icon: <svg width="18" height="16" viewBox="0 0 18 16" fill="none" stroke="#e8e8e8" strokeWidth="1.300"><path d="M1 0v3.500h11V0M1 16v-3.500h11V16M1.500 5.500h10v5h-10zM15.500 0v3M15.500 13v3M15.500 9v2" /><path d="M15.500 4.500v3" strokeWidth="2.500" /></svg> },
  { w: "w-[51px]", icon: <svg width="22" height="22" viewBox="0 0 22 22"><path d="M1 10C2 4 6 .500 11.500.500 18 .500 21 5 21 10v3H8c0 4 5 6 11 3v4c-8 4-16 1-16-6 0-3 2-5.500 5-7-1 1-1.500 2-1.600 3h8.600C15 4 6 3.500 1 10z" fill="#0f7fe0" /></svg> },
  { w: "w-[49px]", icon: <svg width="22" height="20" viewBox="0 0 22 20"><path d="M1 2h8l2 2h10v14H1z" fill="#f5c863" /><path d="M1 5h20v13H1z" fill="#fbdc8e" /><path d="M5 11h12v8h-3v-4H8v4H5z" fill="#46a4e3" /></svg> },
  { w: "w-[48px]", icon: <svg width="24" height="24" viewBox="0 0 24 24"><path d="M8 6V4c0-4 8-4 8 0v2" fill="none" stroke="#fff" strokeWidth="1.500" /><path d="M1 6h22v15l-1 1H2l-1-1z" fill="#fff" /><path d="M7 9h4.500v4.500H7z" fill="#f25022" /><path d="M12.500 9H17v4.500h-4.500z" fill="#7fba00" /><path d="M7 14.500h4.500V19H7z" fill="#00a4ef" /><path d="M12.500 14.500H17V19h-4.500z" fill="#ffb900" /></svg> },
  { w: "w-[50px]", icon: <svg width="24" height="20" viewBox="0 0 24 20"><path d="M12 0l12 7v13H0V7z" fill="#fff" /><path d="M1 7h22L14 14l-1-3z" fill="#111" /></svg> },
  { w: "w-[49px]", line: "w-[40px]", icon: <svg width="24" height="20" viewBox="0 0 24 20"><path d="M2 1h8l2 2h9v14H2z" fill="#e0ede5" /><path d="M2 18l4-11h17l-3 11z" fill="#3f9a68" /><path d="M11 10l4 2.500-4 2.500z" fill="#1d4a32" /></svg> },
  { w: "w-[49px]", line: "w-[40px]", icon: <svg width="24" height="24" viewBox="0 0 24 24"><circle cx="12" cy="12" r="11.500" fill="#d9c9ea" /><circle cx="12" cy="12" r="10" fill="#6f3a95" /><path d="M6 6l3.500 2h5L18 6v6c0 3-2 5-4 6h-4c-2-1-4-3-4-6z" fill="#f5f0fa" /><path d="M8 11h8" stroke="#d8c8e6" strokeWidth="1.500" /></svg> },
  { w: "w-[48px]", line: "w-[48px]", bg: "bg-[#3b4046]", icon: <svg width="24" height="24" viewBox="0 0 24 24"><rect width="24" height="24" fill="#14944a" /><path d="M7 3h11v14l-1 4H6l-1-3h2z" fill="#f3f8f4" /><path d="M9 6h6M9 9h6M9 12h6M9 15h5" stroke="#14944a" strokeWidth="1.300" strokeDasharray="4 1" /></svg> },
  { w: "w-[49px]", line: "w-[40px]", icon: <svg width="24" height="22" viewBox="0 0 24 22"><path d="M3 4l9 13M13 3L4 18" stroke="#d9364a" strokeWidth="4.500" strokeLinecap="round" /><text x="13" y="15" fontSize="8" fontWeight="700" fill="#fff" fontFamily="Liberation Sans">Rx</text></svg> },
  { w: "w-[49px]", line: "w-[40px]", icon: <svg width="22" height="20" viewBox="0 0 22 20"><rect width="22" height="20" fill="#f0f0f0" /><path d="M3 5h8v12H3z" fill="#4c979c" /><path d="M12 5h4v12h-4z" fill="#c3cdb6" /><path d="M18.500 4v9" stroke="#333" strokeWidth="1.500" /></svg> },
];

function Taskbar() {
  return (
    <div className="flex h-[40px] shrink-0 bg-[#060a12] font-['Open_Sans',sans-serif] text-white">
      <div className="flex w-[48px] items-center justify-center">
        <svg width="17" height="17" viewBox="0 0 17 17" fill="#fff"><path d="M0 2.500L7.500 1.400V8H0zM8.500 1.200L17 0v8H8.500zM0 9h7.500v6.600L0 14.500zM8.500 9H17v8l-8.500-1.200z" /></svg>
      </div>
      <div className="flex w-[344px] items-center bg-[#f2f2f2] pl-[10px] text-[#3c3c3c]">
        <span className="h-[20px] w-[20px] rounded-full border-[2.5px] border-[#111]" />
        <span className="ml-[10px] text-[15px] tracking-[-0.1px]">Type here to search</span>
        <Mic size={19} strokeWidth={1.5} className="ml-auto mr-[11px] text-black" />
      </div>
      {APPS.map((a, i) => (
        <div key={i} className={`relative flex items-center justify-center ${a.w} ${a.bg ?? ""}`}>
          {a.icon}
          {a.line && <span className={`absolute bottom-0 h-[2px] bg-[#76a9dc] ${a.line}`} />}
        </div>
      ))}
      <div className="ml-auto flex items-center pr-[4px]">
        <svg width="16" height="16" viewBox="0 0 16 16" fill="none" stroke="#fff" strokeWidth="1.200"><circle cx="11" cy="3.500" r="2.700" /><circle cx="5" cy="7.500" r="2.500" /><path d="M1 15c0-6 8-6 8 0M8 7c3-1.500 7 0 7 4" /></svg>
        <svg className="ml-[22px]" width="12" height="8" viewBox="0 0 12 8" fill="none" stroke="#fff" strokeWidth="1.400"><path d="M1 7l5-5 5 5" /></svg>
        <svg className="ml-[10px]" width="17" height="14" viewBox="0 0 17 14" fill="none" stroke="#fff" strokeWidth="1.200"><path d="M5 2h11v8H4M1 1h4v3H1zM3 4v7M8 13h6M11 10v3" /></svg>
        <svg className="ml-[7px]" width="18" height="14" viewBox="0 0 18 14" fill="none" stroke="#fff" strokeWidth="1.200"><path d="M1 5h2l4-3.500v11L3 9H1zM9.500 5q1.500 2 0 4M12 3q3 4 0 8M14.500 1.500q4 5.500 0 11" /></svg>
        <div className="ml-[6px] w-[58px] text-center text-[12px] leading-[18px] tracking-[-0.5px]">4:07 PM<br />1/25/2019</div>
        <svg className="ml-[14px]" width="17" height="17" viewBox="0 0 17 17" fill="none" stroke="#fff" strokeWidth="1.200"><path d="M1 1h15v11h-5l-2.500 3.500L6 12H1z" /></svg>
        <span className="ml-[20px] h-[40px] w-px bg-[#555]" />
      </div>
    </div>
  );
}

export default function App() {
  return (
    <div className="relative flex h-[1080px] w-[1920px] flex-col overflow-hidden bg-[#f0f0f0] font-['Liberation_Sans',sans-serif] text-[11.5px] tracking-[-0.4px] text-[#101010]">
      <TitleBar />
      <MenuBar />
      <Ribbon />
      <ToolBar />
      <DocTabs />
      <div className="ml-[3px] mr-[3px] flex h-[845px] shrink-0 border-l border-t border-[#696969]">
        <TreePanel />
        <div className="flex w-[1578px] shrink-0 flex-col">
          <SectionHeader>Biditem Information</SectionHeader>
          <BiditemSection />
          <SectionHeader>Activity Information</SectionHeader>
          <ActivitySection />
          <ActivityTabs />
          <div className="h-[2px] shrink-0" />
          <SectionHeader>Activity Productivity Information and Options</SectionHeader>
          <Productivity />
          <ResourceDetail />
        </div>
        <SideBar />
      </div>
      <div className="mt-[2px] flex-1 border-y border-[#d8d8d8] bg-[#fafafa]" />
      <Taskbar />
      <div className="absolute left-[3px] top-[4px] z-20"><Logo /></div>
      <RestoreDialog />
      <CreateDialog />
      <ProgressPopup />
    </div>
  );
}
